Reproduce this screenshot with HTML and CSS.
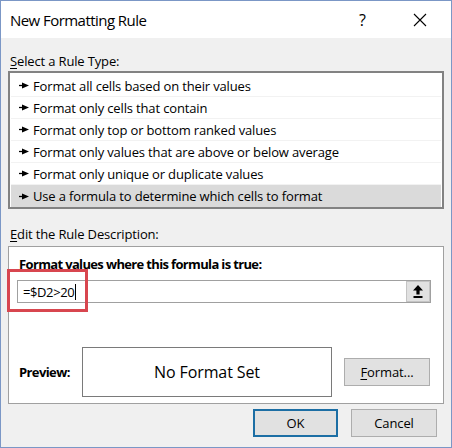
FILE: index.html
```html
<!DOCTYPE html>
<html>
<head>
<meta charset="utf-8">
<link rel="stylesheet" href="styles.css">
</head>
<body>
<div class="window">
  <div class="titlebar">
    <span class="title">New Formatting Rule</span>
    <span class="help">?</span>
    <svg class="close" width="14" height="14" viewBox="0 0 14 14"><path d="M1 1L13 13M13 1L1 13" stroke="#000" stroke-width="1.1" fill="none"/></svg>
  </div>
  <div class="body">
    <div class="label label-rule"><u>S</u>elect a Rule Type:</div>
    <div class="listbox">
      <div class="item"><svg class="arrow" width="10" height="7" viewBox="0 0 10 7"><path d="M0 3.5H4" stroke="#000" stroke-width="1.3"/><path d="M3 0.5L10 3.5L3 6.5Z" fill="#000"/></svg>Format all cells based on their values</div>
      <div class="item"><svg class="arrow" width="10" height="7" viewBox="0 0 10 7"><path d="M0 3.5H4" stroke="#000" stroke-width="1.3"/><path d="M3 0.5L10 3.5L3 6.5Z" fill="#000"/></svg>Format only cells that contain</div>
      <div class="item"><svg class="arrow" width="10" height="7" viewBox="0 0 10 7"><path d="M0 3.5H4" stroke="#000" stroke-width="1.3"/><path d="M3 0.5L10 3.5L3 6.5Z" fill="#000"/></svg>Format only top or bottom ranked values</div>
      <div class="item"><svg class="arrow" width="10" height="7" viewBox="0 0 10 7"><path d="M0 3.5H4" stroke="#000" stroke-width="1.3"/><path d="M3 0.5L10 3.5L3 6.5Z" fill="#000"/></svg>Format only values that are above or below average</div>
      <div class="item"><svg class="arrow" width="10" height="7" viewBox="0 0 10 7"><path d="M0 3.5H4" stroke="#000" stroke-width="1.3"/><path d="M3 0.5L10 3.5L3 6.5Z" fill="#000"/></svg>Format only unique or duplicate values</div>
      <div class="item selected"><svg class="arrow" width="10" height="7" viewBox="0 0 10 7"><path d="M0 3.5H4" stroke="#000" stroke-width="1.3"/><path d="M3 0.5L10 3.5L3 6.5Z" fill="#000"/></svg>Use a formula to determine which cells to format</div>
    </div>
    <div class="label label-edit"><u>E</u>dit the Rule Description:</div>
    <div class="desc">
      <div class="desc-title">Format values where this formula is true:</div>
      <div class="formula-wrap">
        <div class="formula">
          <span class="formula-text">=$D2&gt;20</span><span class="caret"></span>
          <span class="collapse">
            <svg width="10" height="13" viewBox="0 0 10 13"><path d="M5 0L10 5.5H6.6V9.5H3.4V5.5H0Z" fill="#000"/><rect x="0.5" y="11" width="9" height="2" fill="#000"/></svg>
          </span>
        </div>
        <div class="highlight"></div>
      </div>
      <div class="preview-row">
        <span class="preview-label">Preview:</span>
        <div class="preview-box">No Format Set</div>
        <span class="btn format"><u>F</u>ormat...</span>
      </div>
    </div>
    <div class="footer">
      <span class="btn ok">OK</span>
      <span class="btn cancel">Cancel</span>
    </div>
  </div>
</div>
</body>
</html>
```

FILE: styles.css
```css
* { box-sizing: border-box; }
html, body { margin: 0; padding: 0; background: #ffffff; }
body { font-family: "Open Sans", "Noto Sans", sans-serif; color: #000; }

.window {
  width: 452px;
  height: 448px;
  border: 1px solid #7b97c6;
  background: #f0f0f0;
  overflow: hidden;
}

.titlebar {
  height: 37px;
  background: #ffffff;
  display: flex;
  align-items: center;
  padding-left: 9px;
}
.title { font-size: 15px; flex: 1; letter-spacing: -0.55px; }
.help { font-size: 16px; margin-right: 47px; }
.close { margin-right: 24px; }

.body { padding: 0 7px; }

.label {
  font-size: 13px;
  line-height: 18px;
  height: 18px;
  padding-left: 2px;
  letter-spacing: -0.15px;
}
.label u { text-underline-offset: 2px; }
.label-rule { margin: 14px 0 1px; }
.label-edit { margin: 16px 0 3px; }

.listbox {
  background: #ffffff;
  border: 2px solid #828282;
  padding: 2px 1px 0;
  height: 138px;
}
.item {
  height: 22px;
  display: flex;
  align-items: center;
  font-size: 13px;
  letter-spacing: -0.15px;
  padding-left: 8px;
  border-bottom: 1px solid #f2f2f2;
}
.item:last-child { border-bottom: none; }
.item.selected { background: #dadada; }
.arrow { margin-right: 4px; flex: none; }

.desc {
  background: #ffffff;
  border: 1px solid #a0a0a0;
  height: 158px;
  padding: 8px 10px 0;
}
.desc-title {
  font-weight: bold;
  font-size: 13px;
  line-height: 18px;
  letter-spacing: -0.65px;
}

.formula-wrap {
  position: relative;
  margin: 7px 0 0 -2px;
  width: 414px;
}
.formula {
  height: 23px;
  border: 1px solid #a0a0a0;
  display: flex;
  align-items: center;
  padding-left: 5px;
  font-size: 13px;
}
.formula-text { letter-spacing: -0.4px; }
.caret { width: 1px; height: 16px; background: #000; margin-left: 1px; }
.collapse {
  margin-left: auto;
  width: 24px;
  height: 21px;
  background: #e1e1e1;
  border: 1px solid #c4c4c4;
  display: flex;
  align-items: center;
  justify-content: center;
}
.highlight {
  position: absolute;
  left: -10px;
  top: -11px;
  width: 81px;
  height: 43px;
  border: 3px solid #d8464f;
}

.preview-row {
  display: flex;
  align-items: center;
  margin-top: 44px;
}
.preview-label {
  font-weight: bold;
  font-size: 13px;
  letter-spacing: -0.6px;
  width: 63px;
}
.preview-box {
  width: 250px;
  height: 50px;
  border: 1px solid #7a7a7a;
  display: flex;
  align-items: center;
  justify-content: center;
  font-size: 16px;
  letter-spacing: -0.1px;
}

.btn {
  display: flex;
  align-items: center;
  justify-content: center;
  height: 28px;
  width: 86px;
  background: #e1e1e1;
  border: 1px solid #adadad;
  font-size: 13px;
  letter-spacing: -0.1px;
}
.btn u { text-underline-offset: 2px; }
.format { margin-left: 12px; }

.footer {
  display: flex;
  justify-content: flex-end;
  gap: 13px;
  margin-top: 5px;
  padding-right: 7px;
}
.ok { border: 2px solid #1c6ea4; width: 85px; }
```
